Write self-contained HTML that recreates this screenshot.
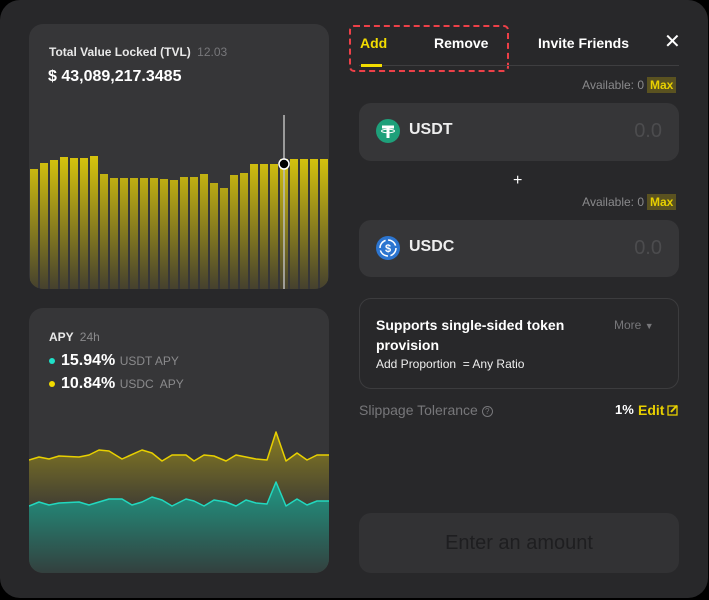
<!DOCTYPE html>
<html><head><meta charset="utf-8"><style>
*{margin:0;padding:0;box-sizing:border-box}
body{width:709px;height:600px;background:#000;font-family:"Liberation Sans",sans-serif;position:relative;overflow:hidden;color:#fff}
.panel{position:absolute;left:0;top:0;width:708px;height:598px;background:#28282a;border-radius:20px}
.card{position:absolute;left:29px;width:300px;background:#363638;border-radius:14px;overflow:hidden}
.abs{position:absolute;white-space:nowrap}
.box{position:absolute;left:359px;width:320px;background:#363638;border-radius:12px}
.max{position:absolute;background:#5a5220;color:#e8d000;font-size:12px;font-weight:bold;padding:1px 3px;height:16px;line-height:14px}
.avail{font-size:12px;color:#8a8a8c}
</style></head><body>
<div class="panel"></div>

<div class="card" style="top:24px;height:265px">
<div class="abs" style="left:20px;top:21px;font-size:12px;font-weight:bold;color:#e8e8e8">Total Value Locked (TVL) <span style="font-weight:normal;color:#77777a;margin-left:3px">12.03</span></div>
<div class="abs" style="left:19px;top:44px;font-size:16px;font-weight:bold">$ 43,089,217.3485</div>
<svg class="abs" style="left:0;top:0" width="300" height="265">
<defs><linearGradient id="bg2" x1="0" y1="130" x2="0" y2="265" gradientUnits="userSpaceOnUse"><stop offset="0" stop-color="#d9c60c"/><stop offset="1" stop-color="#45412e"/></linearGradient></defs>
<g fill="url(#bg2)">
<rect x="1" y="145" width="8" height="120"/><rect x="11" y="139" width="8" height="126"/><rect x="21" y="136" width="8" height="129"/><rect x="31" y="133" width="8" height="132"/><rect x="41" y="134" width="8" height="131"/><rect x="51" y="134" width="8" height="131"/><rect x="61" y="132" width="8" height="133"/><rect x="71" y="150" width="8" height="115"/><rect x="81" y="154" width="8" height="111"/><rect x="91" y="154" width="8" height="111"/><rect x="101" y="154" width="8" height="111"/><rect x="111" y="154" width="8" height="111"/><rect x="121" y="154" width="8" height="111"/><rect x="131" y="155" width="8" height="110"/><rect x="141" y="156" width="8" height="109"/><rect x="151" y="153" width="8" height="112"/><rect x="161" y="153" width="8" height="112"/><rect x="171" y="150" width="8" height="115"/><rect x="181" y="159" width="8" height="106"/><rect x="191" y="164" width="8" height="101"/><rect x="201" y="151" width="8" height="114"/><rect x="211" y="149" width="8" height="116"/><rect x="221" y="140" width="8" height="125"/><rect x="231" y="140" width="8" height="125"/><rect x="241" y="140" width="8" height="125"/><rect x="251" y="135" width="8" height="130"/><rect x="261" y="135" width="8" height="130"/><rect x="271" y="135" width="8" height="130"/><rect x="281" y="135" width="8" height="130"/><rect x="291" y="135" width="8" height="130"/>
</g>
<line x1="255" y1="91" x2="255" y2="265" stroke="#bbb" stroke-width="1.5"/>
<circle cx="255" cy="140" r="5" fill="#000" stroke="#fff" stroke-width="1.5"/>
</svg>
</div>

<div class="card" style="top:308px;height:265px">
<div class="abs" style="left:20px;top:22px;font-size:12px;font-weight:bold;color:#e8e8e8">APY <span style="font-weight:normal;color:#8a8a8c;margin-left:3px">24h</span></div>
<div class="abs" style="left:20px;top:44px;font-size:16px;font-weight:bold"><span style="display:inline-block;width:6px;height:6px;border-radius:50%;background:#1fe0c8;vertical-align:middle;margin-right:6px"></span>15.94% <span style="font-size:12px;font-weight:normal;color:#8a8a8c">USDT APY</span></div>
<div class="abs" style="left:20px;top:67px;font-size:16px;font-weight:bold"><span style="display:inline-block;width:6px;height:6px;border-radius:50%;background:#f2dc00;vertical-align:middle;margin-right:6px"></span>10.84% <span style="font-size:12px;font-weight:normal;color:#8a8a8c">USDC&nbsp; APY</span></div>
<svg class="abs" style="left:-29px;top:-308px" width="360" height="600">
<defs>
<linearGradient id="yg" x1="0" y1="430" x2="0" y2="510" gradientUnits="userSpaceOnUse"><stop offset="0" stop-color="#8a7e20"/><stop offset="1" stop-color="#3e3c34"/></linearGradient>
<linearGradient id="tg" x1="0" y1="480" x2="0" y2="573" gradientUnits="userSpaceOnUse"><stop offset="0" stop-color="#1f9a86"/><stop offset="1" stop-color="#33403e"/></linearGradient>
</defs>
<path d="M29,460 L39,457 L49,459 L59,456 L79,457 L89,455 L99,450 L109,451 L122,459 L142,450 L152,453 L162,461 L172,455 L186,455 L194,461 L204,455 L214,456 L226,461 L236,455 L246,457 L256,459 L267,460 L276,432 L286,461 L297,453 L307,460 L317,455 L329,455 L329,573 L29,573Z" fill="url(#yg)"/>
<path d="M29,460 L39,457 L49,459 L59,456 L79,457 L89,455 L99,450 L109,451 L122,459 L142,450 L152,453 L162,461 L172,455 L186,455 L194,461 L204,455 L214,456 L226,461 L236,455 L246,457 L256,459 L267,460 L276,432 L286,461 L297,453 L307,460 L317,455 L329,455" fill="none" stroke="#e8d000" stroke-width="1.5" stroke-linejoin="round"/>
<path d="M29,506 L39,502 L49,505 L59,503 L79,502 L89,505 L99,502 L109,499 L122,499 L132,505 L142,502 L152,497 L162,500 L172,506 L186,499 L194,501 L204,506 L214,500 L226,502 L236,506 L246,500 L256,503 L267,504 L276,482 L286,506 L297,499 L307,505 L317,501 L329,501 L329,573 L29,573Z" fill="url(#tg)"/>
<path d="M29,506 L39,502 L49,505 L59,503 L79,502 L89,505 L99,502 L109,499 L122,499 L132,505 L142,502 L152,497 L162,500 L172,506 L186,499 L194,501 L204,506 L214,500 L226,502 L236,506 L246,500 L256,503 L267,504 L276,482 L286,506 L297,499 L307,505 L317,501 L329,501" fill="none" stroke="#22d8bf" stroke-width="1.5" stroke-linejoin="round"/>
</svg>
</div>

<div class="abs" style="left:349px;top:25px;width:160px;height:47px;border:2px dashed #ee4048;border-radius:5px"></div>
<div class="abs" style="left:359px;top:65px;width:320px;height:1px;background:#3e3e40"></div>
<div class="abs" style="left:360px;top:35px;font-size:14px;font-weight:bold;color:#f2dc00">Add</div>
<div class="abs" style="left:361px;top:64px;width:21px;height:3px;background:#f2dc00"></div>
<div class="abs" style="left:434px;top:35px;font-size:14px;font-weight:bold">Remove</div>
<div class="abs" style="left:538px;top:35px;font-size:14px;font-weight:bold">Invite Friends</div>
<div class="abs" style="left:664px;top:29px;font-size:20px;color:#fff">✕</div>

<div class="abs avail" style="right:65px;top:78px">Available: 0</div>
<div class="max" style="left:647px;top:77px">Max</div>
<div class="box" style="top:103px;height:58px">
<svg class="abs" style="left:17px;top:16px" width="24" height="24"><circle cx="12" cy="12" r="12" fill="#1ea07a"/><path d="M6,6.5 H18 V9.5 H13.5 V19 H10.5 V9.5 H6Z" fill="#fff"/><ellipse cx="12" cy="12" rx="6.5" ry="1.8" fill="none" stroke="#fff" stroke-width="1"/></svg>
<div class="abs" style="left:50px;top:18px;font-size:16px;font-weight:bold;color:#eee">USDT</div>
<div class="abs" style="right:17px;top:17px;font-size:20px;color:#4c4c4e">0.0</div>
</div>
<div class="abs" style="left:513px;top:172px;font-size:16px">+</div>
<div class="abs avail" style="right:65px;top:195px">Available: 0</div>
<div class="max" style="left:647px;top:194px">Max</div>
<div class="box" style="top:220px;height:57px">
<svg class="abs" style="left:17px;top:16px" width="24" height="24"><circle cx="12" cy="12" r="12" fill="#2c75d0"/><circle cx="12" cy="12" r="8" fill="none" stroke="#fff" stroke-width="1.5" stroke-dasharray="10 2.5"/><text x="12" y="16" font-size="11" font-weight="bold" fill="#fff" text-anchor="middle" font-family="Liberation Sans">$</text></svg>
<div class="abs" style="left:50px;top:18px;font-size:16px;font-weight:bold;color:#eee">USDC</div>
<div class="abs" style="right:17px;top:17px;font-size:20px;color:#4c4c4e">0.0</div>
</div>

<div class="abs" style="left:359px;top:298px;width:320px;height:91px;border:1px solid #3c3c3e;border-radius:12px"></div>
<div class="abs" style="left:376px;top:315px;font-size:14px;font-weight:bold;line-height:20px">Supports single-sided token<br>provision</div>
<div class="abs" style="left:376px;top:357px;font-size:12px;color:#eee">Add Proportion &nbsp;= Any Ratio</div>
<div class="abs" style="left:614px;top:318px;font-size:12px;color:#77777a">More <span style="font-size:9px">▼</span></div>

<div class="abs" style="left:359px;top:402px;font-size:14px;color:#77777a">Slippage Tolerance <span style="display:inline-block;width:11px;height:11px;border:1px solid #77777a;border-radius:50%;font-size:8px;text-align:center;line-height:9px;vertical-align:1px">?</span></div>
<div class="abs" style="left:615px;top:402px;font-size:13px;font-weight:bold">1%</div>
<div class="abs" style="left:638px;top:402px;font-size:14px;font-weight:bold;color:#e8d000">Edit</div>
<svg class="abs" style="left:667px;top:404px" width="12" height="12"><rect x="1" y="2" width="9" height="9" fill="none" stroke="#e8d000" stroke-width="1.3"/><path d="M4,8 L10,1.5" stroke="#e8d000" stroke-width="2"/></svg>

<div class="box" style="top:513px;height:60px;background:#323234">
<div class="abs" style="left:0;width:320px;text-align:center;top:19px;font-size:20px;color:#1e1e20">Enter an amount</div>
</div>
</body></html>
